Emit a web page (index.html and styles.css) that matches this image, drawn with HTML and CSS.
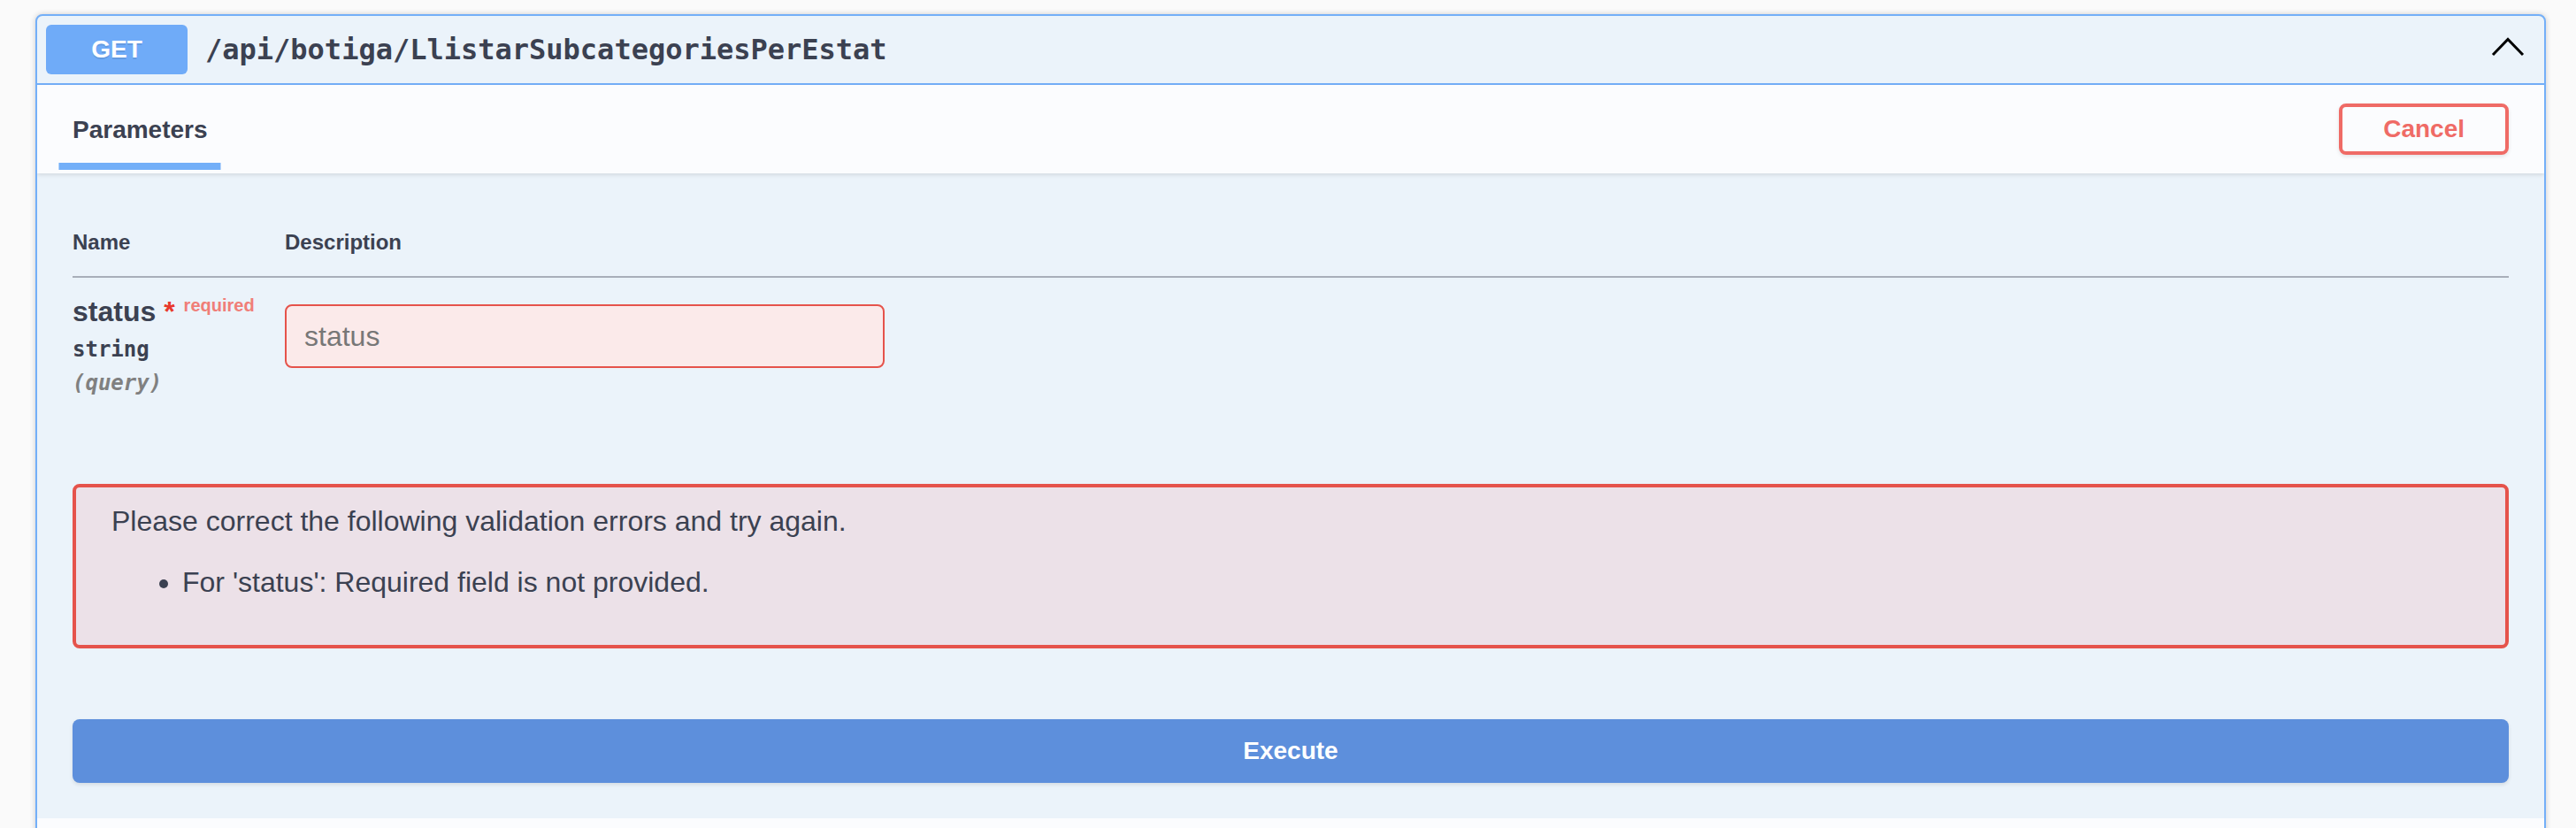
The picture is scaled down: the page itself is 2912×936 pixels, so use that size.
FILE: index.html
```html
<!DOCTYPE html>
<html lang="en">
<head>
<meta charset="utf-8">
<title>GET /api/botiga/LlistarSubcategoriesPerEstat</title>
<link rel="stylesheet" href="styles.css">
</head>
<body>
<div class="wrapper">
  <div class="opblock">
    <div class="summary">
      <span class="method">GET</span>
      <span class="path">/api/botiga/LlistarSubcategoriesPerEstat</span>
      <span class="spacer"></span>
      <svg class="arrow" width="40" height="40" viewBox="0 0 40 40" aria-hidden="true"><polyline points="3,26 20,8.5 37,26" fill="none" stroke="#000" stroke-width="3"/></svg>
    </div>
    <div class="section-header">
      <div class="tab"><span class="tab-label">Parameters</span></div>
      <button class="btn-cancel">Cancel</button>
    </div>
    <div class="body">
      <div class="table-container">
        <table class="params">
          <thead>
            <tr><th class="col-name">Name</th><th>Description</th></tr>
          </thead>
          <tbody>
            <tr>
              <td class="col-name">
                <div class="param-name">status<span class="star">&nbsp;*</span><span class="req">required</span></div>
                <div class="param-type">string</div>
                <div class="param-in">(query)</div>
              </td>
              <td>
                <input class="param-input" type="text" placeholder="status">
              </td>
            </tr>
          </tbody>
        </table>
      </div>
      <div class="errors">
        Please correct the following validation errors and try again.
        <ul>
          <li>For 'status': Required field is not provided.</li>
        </ul>
      </div>
      <div class="execute-wrap">
        <button class="btn-execute">Execute</button>
      </div>
    </div>
    <div class="responses-header"></div>
  </div>
</div>
</body>
</html>
```
FILE: styles.css
```css
html, body {
  margin: 0;
  padding: 0;
  overflow: hidden;
  height: 936px;
}
body {
  background: #fafafa;
  font-family: "Liberation Sans", Arial, sans-serif;
  color: #3b4151;
}
.wrapper {
  padding: 16px 34px 0 40px;
}
.opblock {
  border: 2px solid #73aff8;
  border-radius: 8px;
  background: #ebf3fa;
  box-shadow: 0 0 6px rgba(0, 0, 0, 0.19);
  overflow: hidden;
}
.summary {
  display: flex;
  align-items: center;
  padding: 10px;
  border-bottom: 2px solid #73aff8;
}
.method {
  width: 160px;
  height: 56px;
  border-radius: 6px;
  background: #6fabf8;
  color: #fff;
  font-size: 28px;
  font-weight: 700;
  text-shadow: 0 2px 0 rgba(0, 0, 0, 0.1);
  display: flex;
  align-items: center;
  justify-content: center;
}
.path {
  padding: 0 20px;
  font-family: "DejaVu Sans Mono", monospace;
  font-weight: 700;
  font-size: 32px;
  color: #3b4151;
}
.spacer { flex: 1; }
.arrow {
  display: block;
  margin-right: 11px;
  margin-top: -1px;
}
.section-header {
  height: 100px;
  box-sizing: border-box;
  padding: 0 40px;
  display: flex;
  align-items: center;
  justify-content: space-between;
  background: #fbfcfe;
  box-shadow: 0 2px 4px rgba(0, 0, 0, 0.1);
  position: relative;
}
.tab {
  font-size: 28px;
  font-weight: 700;
  color: #3b4151;
  margin-top: 2px;
}
.tab-label {
  position: relative;
}
.tab-label::after {
  content: "";
  position: absolute;
  left: 50%;
  transform: translateX(-50%);
  width: 120%;
  height: 8px;
  bottom: -30px;
  background: #73aff8;
}
.btn-cancel {
  font-family: "Liberation Sans", Arial, sans-serif;
  font-size: 28px;
  font-weight: 700;
  line-height: 30px;
  color: #ef6b66;
  background: transparent;
  border: 4px solid #ef6b66;
  border-radius: 8px;
  padding: 10px 46px;
  box-shadow: 0 2px 4px rgba(0, 0, 0, 0.1);
}
.body {
  padding-bottom: 40px;
}
.table-container {
  padding: 40px 40px 40px;
}
.params {
  width: 100%;
  border-collapse: collapse;
}
.params th {
  text-align: left;
  font-size: 24px;
  font-weight: 700;
  padding: 24px 0;
  border-bottom: 2px solid #a8aeb9;
  color: #3b4151;
}
.params td {
  padding: 20px 0 0;
  vertical-align: top;
}
.col-name {
  width: 240px;
}
.param-name {
  font-size: 32px;
  font-weight: 700;
  color: #3b4151;
}
.star {
  color: #e8392c;
}
.req {
  color: #f07e78;
  font-size: 20px;
  padding: 10px;
  position: relative;
  top: -11px;
}
.param-type {
  font-family: "DejaVu Sans Mono", monospace;
  font-size: 24px;
  font-weight: 700;
  padding: 10px 0;
  color: #3b4151;
}
.param-in {
  font-family: "DejaVu Sans Mono", monospace;
  font-size: 24px;
  font-weight: 700;
  font-style: italic;
  color: #808080;
}
.param-input {
  display: block;
  box-sizing: border-box;
  width: 678px;
  height: 72px;
  margin: 10px 0;
  padding: 0 20px;
  border: 2px solid #e5534b;
  border-radius: 8px;
  background: #fbeaea;
  font-family: "Liberation Sans", Arial, sans-serif;
  font-size: 32px;
  color: #3b4151;
  outline: none;
}
.param-input::placeholder {
  color: #777777;
}
.errors {
  margin: 60px 40px 0;
  padding: 20px 40px;
  border: 4px solid #e5534b;
  border-radius: 8px;
  background: #ece1e8;
  font-size: 32px;
  color: #3b4151;
}
.errors ul {
  margin: 32px 0;
  padding-left: 80px;
}
.execute-wrap {
  margin: 80px 40px 0;
}
.btn-execute {
  display: block;
  width: 100%;
  height: 72px;
  border: 0;
  border-radius: 8px;
  background: #5d8fdc;
  color: #fff;
  font-family: "Liberation Sans", Arial, sans-serif;
  font-size: 28px;
  font-weight: 700;
  box-shadow: 0 2px 4px rgba(0, 0, 0, 0.1);
}
.responses-header {
  height: 100px;
  background: #fbfcfe;
}
```
